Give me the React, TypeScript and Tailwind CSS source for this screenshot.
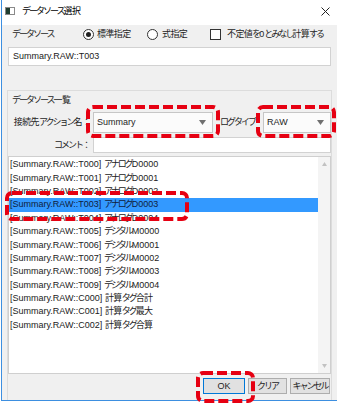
import React from "react";

const items: [string, string][] = [
  ["T000", "アナログD0000"],
  ["T001", "アナログD0001"],
  ["T002", "アナログD0002"],
  ["T003", "アナログD0003"],
  ["T004", "アナログD0004"],
  ["T005", "デジタルM0000"],
  ["T006", "デジタルM0001"],
  ["T007", "デジタルM0002"],
  ["T008", "デジタルM0003"],
  ["T009", "デジタルM0004"],
  ["C000", "計算タグ合計"],
  ["C001", "計算タグ最大"],
  ["C002", "計算タグ合算"],
];

// Splits text into kana / kanji / latin runs so that the kana can be set tighter,
// imitating the narrow kana of Meiryo UI.
function T({ s }: { s: string }) {
  const re = /([\u3040-\u30ff\uff01-\uff5e]+)|([\u4e00-\u9fff\u3000-\u303f]+)|([^\u3040-\u30ff\uff01-\uff5e\u4e00-\u9fff\u3000-\u303f]+)/g;
  const out: React.ReactNode[] = [];
  let m: RegExpExecArray | null;
  let k = 0;
  while ((m = re.exec(s)) !== null) {
    if (m[1]) out.push(<span key={k++} className="tracking-[-2px]">{m[1]}</span>);
    else if (m[2]) out.push(<span key={k++} className="tracking-[-0.6px]">{m[2]}</span>);
    else out.push(<span key={k++}>{m[3]}</span>);
  }
  return <>{out}</>;
}

function Arrow() {
  return (
    <svg width="7" height="5" viewBox="0 0 7 5">
      <path d="M0 0 H7 L3.5 5 Z" fill="#707070" />
    </svg>
  );
}

function Dropdown({ value, className }: { value: string; className: string }) {
  return (
    <div className={`h-[21px] bg-[#fbfbfb] border border-[#c6c6c6] flex items-center pl-[3px] pr-[6px] ${className}`}>
      <span className="flex-1">{value}</span>
      <Arrow />
    </div>
  );
}

function RedBox({ x, y, w, h }: { x: number; y: number; w: number; h: number }) {
  return (
    <svg
      className="absolute pointer-events-none"
      style={{ left: x, top: y }}
      width={w}
      height={h}
      viewBox={`0 0 ${w} ${h}`}
    >
      <rect
        x={2}
        y={2}
        width={w - 4}
        height={h - 4}
        rx={5}
        fill="none"
        stroke="#e60012"
        strokeWidth={4}
        strokeDasharray="10 4"
      />
    </svg>
  );
}

export default function App() {
  return (
    <div className="relative w-[337px] h-[405px] bg-white pl-[1px] overflow-hidden whitespace-nowrap font-['Liberation_Sans','Noto_Sans_CJK_JP',sans-serif] text-[9px] leading-none text-[#1e1e1e]">
      <div className="h-[401px] flex flex-col border-l border-b border-[#3d8fe0] bg-[#f0f0f0]">
        {/* title bar */}
        <div className="h-[25px] bg-white flex items-center pl-[3px] pr-[7px] pb-[3px]">
          <div className="w-[10px] h-[8px] border border-[#8a8a8a] flex">
            <div className="w-[4px] bg-[#1f3d30]" />
            <div className="flex-1 bg-white" />
          </div>
          <span className="ml-[7px] text-black">
            <T s="データソース選択" />
          </span>
          <div className="flex-1" />
          <svg width="9" height="9" viewBox="0 0 9 9">
            <path d="M0.5 0.5 L8.5 8.5 M8.5 0.5 L0.5 8.5" stroke="#222" strokeWidth="1" />
          </svg>
        </div>

        {/* body */}
        <div className="flex-1 flex flex-col px-[6px]">
          <div className="h-[18px] flex items-center">
            <span className="ml-[4px] w-[71px]">
              <T s="データソース" />
            </span>
            <div className="w-[11px] h-[11px] rounded-full border border-[#333] bg-white flex items-center justify-center">
              <div className="w-[5px] h-[5px] rounded-full bg-[#222]" />
            </div>
            <span className="ml-[3px] w-[50px]">
              <T s="標準指定" />
            </span>
            <div className="w-[11px] h-[11px] rounded-full border border-[#333] bg-white" />
            <span className="ml-[4px] w-[48px]">
              <T s="式指定" />
            </span>
            <div className="w-[11px] h-[11px] border border-[#333] bg-white" />
            <span className="ml-[6px]">
              <T s="不定値を0とみなし計算する" />
            </span>
          </div>

          <div className="mt-[4px] h-[19px] bg-white border border-[#d2d2d2] flex items-center pl-[4px] text-[#222]">
            Summary.RAW::T003
          </div>

          {/* group box */}
          <div className="mt-[24px] -mx-[1px] flex-1 flex flex-col border-l border-t border-r border-[#dcdcdc]">
            <div className="h-[18px] flex items-center pl-[4px]">
              <T s="データソース一覧" />
            </div>

            <div className="mt-[3px] flex items-center">
              <span className="w-[81px] text-right">
                <T s="接続先アクション名：" />
              </span>
              <Dropdown value="Summary" className="ml-[4px] w-[120px]" />
              <span className="ml-[7px] w-[32px]">
                <T s="ログタイプ" />
              </span>
              <Dropdown value="RAW" className="ml-[11px] flex-1" />
            </div>

            <div className="mt-[4px] flex items-center">
              <span className="w-[81px] text-right">
                <T s="コメント：" />
              </span>
              <div className="ml-[4px] flex-1 h-[16px] bg-white border border-[#d2d2d2]" />
            </div>

            <div className="mt-[3px] h-[218px] bg-white border border-[#cfcfcf] flex">
              <div className="flex-1 pt-[1px] flex flex-col text-[#222]">
                {items.map(([code, name], i) => (
                  <div
                    key={code}
                    className={`h-[13.4px] flex items-center pl-[1px] ${i === 3 ? "bg-[#3399ff] text-[#10203a]" : ""}`}
                  >
                    <span>[Summary.RAW::{code}]&nbsp;</span>
                    <T s={name} />
                  </div>
                ))}
              </div>
              <div className="w-[12px] bg-[#f4f4f4] flex flex-col items-center justify-between py-[5px]">
                <svg width="5" height="4" viewBox="0 0 5 4">
                  <path d="M0 4 L2.5 0 L5 4 Z" fill="#c2c2c2" />
                </svg>
                <svg width="5" height="4" viewBox="0 0 5 4">
                  <path d="M0 0 L5 0 L2.5 4 Z" fill="#c2c2c2" />
                </svg>
              </div>
            </div>

            <div className="mt-[4px] flex justify-end gap-[3px] pr-[1px]">
              <button className="w-[42px] h-[16px] bg-[#e1e1e1] border border-[#0078d7] flex items-center justify-center">OK</button>
              <button className="w-[39px] h-[16px] bg-[#e1e1e1] border border-[#adadad] flex items-center justify-center">
                <T s="クリア" />
              </button>
              <button className="w-[40px] h-[16px] bg-[#e1e1e1] border border-[#adadad] flex items-center justify-center">
                <T s="キャンセル" />
              </button>
            </div>
            <div className="h-[6px]" />
          </div>
        </div>
      </div>

      <RedBox x={86} y={105} w={134} h={33} />
      <RedBox x={256} y={105} w={80} h={33} />
      <RedBox x={5} y={191} w={184} h={30} />
      <RedBox x={196} y={371} w={59} h={32} />
    </div>
  );
}
